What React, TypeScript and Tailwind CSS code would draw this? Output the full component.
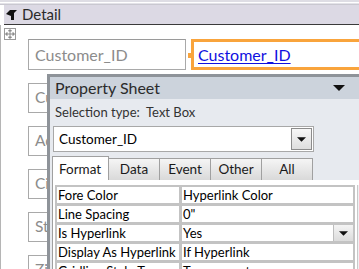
const rows: { name: string; value: string; drop?: boolean }[] = [
  { name: 'Fore Color', value: 'Hyperlink Color' },
  { name: 'Line Spacing', value: '0"' },
  { name: 'Is Hyperlink', value: 'Yes', drop: true },
  { name: 'Display As Hyperlink', value: 'If Hyperlink' },
  { name: 'Gridline Style Top', value: 'Transparent' },
]

const tabs = ['Data', 'Event', 'Other', 'All']

const hidden = ['Customer_ID', 'Address', 'City', 'State', 'Zip']

function DropArrow({ w = 9, h = 5 }: { w?: number; h?: number }) {
  return (
    <svg width={w} height={h} viewBox="0 0 10 5">
      <path d="M0 0h10L5 5z" fill="#111" />
    </svg>
  )
}

export default function App() {
  return (
    <div className="relative w-[359px] h-[269px] overflow-hidden bg-white font-['Lato','Open_Sans',sans-serif]">
      {/* section header */}
      <div className="h-[5px] bg-[#e3e2e8] border-t-[2px] border-b border-t-[#dedde4] border-b-[#c9c8d0] [box-shadow:inset_0_1px_0_#fff]" />
      <div className="flex items-center gap-[5px] h-[20px] ml-[4px] pl-[2px] bg-[#dcd9e4] border-b border-[#3a3a3a] text-[15px] text-[#2a2a2a]">
        <svg width="11" height="10" viewBox="0 0 11 10">
          <path d="M0 4L4 0h7L8 3v7H5L5 6z" fill="#111" />
        </svg>
        <span>Detail</span>
      </div>

      {/* design canvas */}
      <div className="relative border-l border-[#b5b5b5] h-[244px]">
        <div className="absolute left-[3px] top-[3px] w-[12px] h-[12px] border border-[#9a9a9a] flex items-center justify-center">
          <svg width="10" height="10" viewBox="0 0 10 10">
            <path d="M5 1v8M1 5h8M5 0.5L3.5 2h3zM5 9.5L3.5 8h3zM0.5 5L2 3.5v3zM9.5 5L8 3.5v3z" stroke="#8a8a8a" strokeWidth="1" fill="#8a8a8a" />
          </svg>
        </div>

        <div className="flex flex-col gap-[13px] pl-[27px] pt-[14px]">
          <div className="flex items-stretch gap-[2px]">
            <div className="w-[158px] h-[31px] border border-[#a9a9a9] border-t-dashed border-t-[#9a9a9a] flex items-center pl-[6px] text-[16px] text-[#8c8c8c]">
              Customer_ID
            </div>
            <div className="relative flex-1 h-[31px] ml-[3px] border-[3px] border-r-0 border-[#f9a43c] flex items-center pl-[4px] text-[16px] text-[#1010e0] underline decoration-1 underline-offset-2">
              <span className="absolute -left-[6px] top-[11px] w-[4px] h-[5px] bg-[#f9a43c]" />
              Customer_ID
            </div>
          </div>
          {hidden.map((label) => (
            <div
              key={label}
              className="w-[158px] h-[30px] border border-[#a9a9a9] flex items-center pl-[6px] text-[15.5px] text-[#8c8c8c] whitespace-nowrap"
            >
              {label}
            </div>
          ))}
        </div>

        {/* property sheet window */}
        <div className="absolute left-[46px] top-[49px] w-[330px] h-[220px] border-t-[3px] border-l-[3px] border-[#8e9399] bg-[#e7eaef] text-[#1a1a1a]">
          <div className="flex items-center justify-between h-[22px] bg-[#ccd3dc] pl-[5px] pr-[32px] text-[16px] text-[#2b2b2b]">
            <span>Property Sheet</span>
            <DropArrow w={12} h={6} />
          </div>
          <div className="pl-[5px] pt-[4px] h-[27px] text-[13px] text-[#333] whitespace-pre">Selection type:  Text Box</div>

          <div className="ml-[3px] w-[261px] h-[26px] bg-white border border-[#a8a8a8] flex items-center justify-between pl-[5px] pr-[1px] text-[13.5px] text-black">
            <span>Customer_ID</span>
            <div className="w-[21px] h-[22px] border border-[#8c8c8c] bg-gradient-to-b from-[#f7f7f7] to-[#dedede] flex items-center justify-center">
              <DropArrow />
            </div>
          </div>

          {/* tabs */}
          <div className="flex items-end ml-[2px] mt-[4px] h-[24px] text-[13.5px]">
            <div className="w-[57px] h-[24px] bg-white border border-b-0 border-[#a0a0a0] pl-[6px] pt-[2px]">Format</div>
            {tabs.map((t) => (
              <div
                key={t}
                className="w-[51px] h-[22px] border border-l-0 border-b-0 border-[#a0a0a0] bg-gradient-to-b from-[#f5f5f5] to-[#d9d9d9] flex items-center justify-center"
              >
                {t}
              </div>
            ))}
          </div>

          {/* property grid */}
          <div className="flex ml-[2px] bg-white border-l border-[#a0a0a0] pt-[5px] pl-[2px]">
            <div className="w-[300px] bg-[#c3c3c3] p-[2px] flex flex-col gap-[3px] text-[13px] text-black">
              {rows.map((r) => (
                <div key={r.name} className="flex gap-[3px] h-[16px]">
                  <div className="w-[122px] bg-white pl-[1px] leading-[16px] whitespace-nowrap overflow-hidden">{r.name}</div>
                  <div className="flex-1 bg-white pl-[1px] leading-[16px] flex justify-between">
                    <span>{r.value}</span>
                    {r.drop && (
                      <div className="w-[20px] h-[16px] border-l border-[#bdbdbd] bg-gradient-to-b from-[#f4f4f4] to-[#dcdcdc] flex items-center justify-center">
                        <DropArrow />
                      </div>
                    )}
                  </div>
                </div>
              ))}
            </div>
            <div className="ml-[2px] w-[6px] bg-[#eef0f3] border-l border-[#c9c9c9]" />
          </div>
        </div>
      </div>
    </div>
  )
}
